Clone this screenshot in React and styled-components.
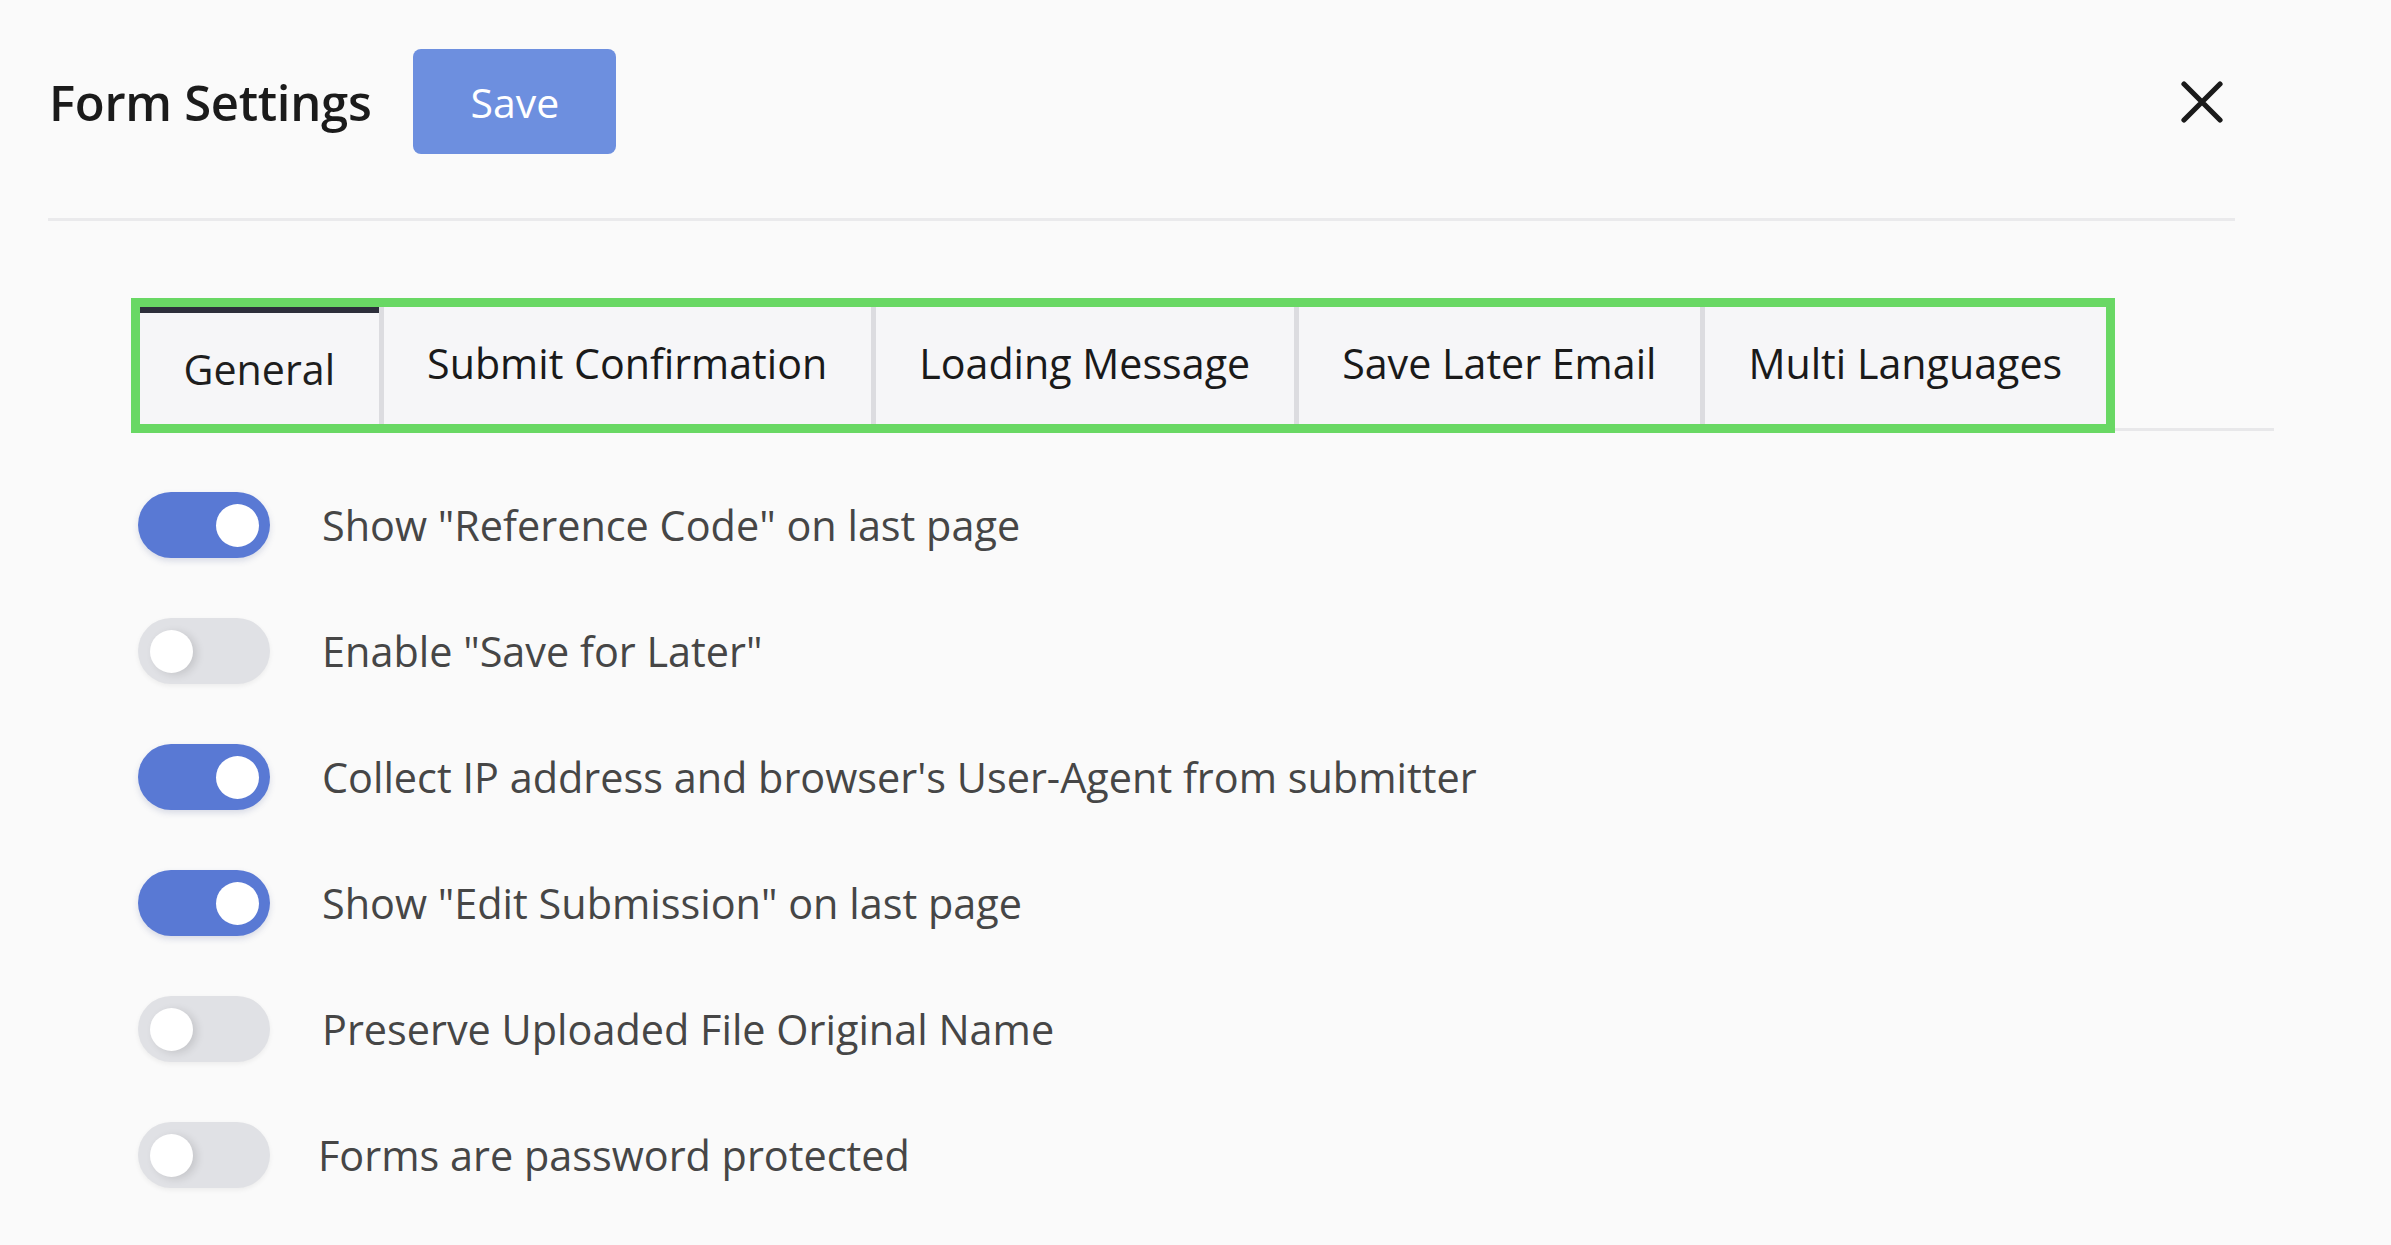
import React, { useState } from 'react'
import styled, { createGlobalStyle } from 'styled-components'

const GlobalStyle = createGlobalStyle`
  html, body {
    margin: 0;
    padding: 0;
    background: #fafafa;
  }
  body {
    font-family: "Open Sans", "Noto Sans", "Liberation Sans", sans-serif;
    color: #222;
  }
`

const Page = styled.div`
  padding: 49px 0 0 48px;
  min-height: 100vh;
  box-sizing: border-box;
`

const Header = styled.header`
  width: 2187px;
  display: flex;
  align-items: center;
  gap: 42px;
  padding-bottom: 64px;
  border-bottom: 3px solid #eaeaec;
`

const Title = styled.h1`
  margin: 0 0 0 1px;
  font-size: 49px;
  font-weight: 600;
  color: #1b1b1b;
  letter-spacing: -0.3px;
`

const SaveButton = styled.button`
  width: 203px;
  height: 105px;
  border: none;
  border-radius: 8px;
  background: #6d8fdf;
  color: #fff;
  font-family: inherit;
  font-size: 41px;
  cursor: pointer;
`

const CloseButton = styled.button`
  margin-left: auto;
  margin-right: 12px;
  width: 42px;
  height: 42px;
  padding: 0;
  border: none;
  background: none;
  display: flex;
  align-items: center;
  justify-content: center;
  cursor: pointer;
`

const TabBar = styled.div`
  margin: 77px 0 0 83px;
  width: 2143px;
  display: flex;
  border-bottom: 3px solid #e8e8ea;
`

const TabList = styled.div`
  display: flex;
  border: 9px solid #69d864;
  margin-bottom: -5px;
  background: #f6f6f8;
`

const Tab = styled.button`
  height: 117px;
  padding: 0 43.5px ${p => (p.$active ? '0' : '6px')};
  border: none;
  border-left: ${p => (p.$first ? 'none' : '5px solid #dcdce0')};
  border-top: ${p => (p.$active ? '6px solid #2d2f3b' : '0')};
  background: #f6f6f8;
  font-family: inherit;
  font-size: 41.2px;
  color: ${p => (p.$active ? '#1e1e1e' : '#1a1a1a')};
  display: flex;
  align-items: center;
  box-sizing: border-box;
  cursor: pointer;
  white-space: nowrap;
`

const Options = styled.div`
  margin: 61px 0 0 90px;
  display: flex;
  flex-direction: column;
  gap: 60px;
`

const Row = styled.label`
  display: flex;
  align-items: center;
  gap: ${p => (p.$tight ? '48px' : '52px')};
  height: 66px;
  cursor: pointer;
`

const Track = styled.span`
  position: relative;
  flex: none;
  width: 132px;
  height: 66px;
  border-radius: 33px;
  background: ${p => (p.$on ? '#5979d4' : '#e0e1e5')};
  box-shadow: ${p => (p.$on ? '0 3px 6px rgba(60, 80, 140, 0.18)' : '0 2px 5px rgba(0, 0, 0, 0.06)')};
`

const Knob = styled.span`
  position: absolute;
  top: 11.5px;
  left: ${p => (p.$on ? '78px' : '12px')};
  width: 43px;
  height: 43px;
  border-radius: 50%;
  background: #fff;
  box-shadow: ${p => (p.$on ? 'none' : '4px 2px 8px rgba(0, 0, 0, 0.12)')};
`

const Label = styled.span`
  font-size: 41.4px;
  color: #464646;
  white-space: nowrap;
`

const tabs = ['General', 'Submit Confirmation', 'Loading Message', 'Save Later Email', 'Multi Languages']

const initialOptions = [
  { label: 'Show "Reference Code" on last page', on: true },
  { label: 'Enable "Save for Later"', on: false },
  { label: "Collect IP address and browser's User-Agent from submitter", on: true },
  { label: 'Show "Edit Submission" on last page', on: true },
  { label: 'Preserve Uploaded File Original Name', on: false },
  { label: 'Forms are password protected', on: false, tight: true },
]

const App = () => {
  const [active, setActive] = useState(0)
  const [options, setOptions] = useState(initialOptions)

  const toggle = (i) => {
    setOptions(options.map((o, j) => (j === i ? { ...o, on: !o.on } : o)))
  }

  return (
    <Page>
      <GlobalStyle />
      <Header>
        <Title>Form Settings</Title>
        <SaveButton>Save</SaveButton>
        <CloseButton aria-label="close">
          <svg width="42" height="42" viewBox="0 0 42 42">
            <path d="M3 3 L39 39 M39 3 L3 39" stroke="#1a1a1a" strokeWidth="5.2" strokeLinecap="round" />
          </svg>
        </CloseButton>
      </Header>

      <TabBar>
        <TabList>
          {tabs.map((t, i) => (
            <Tab key={t} $first={i === 0} $active={i === active} onClick={() => setActive(i)}>
              {t}
            </Tab>
          ))}
        </TabList>
      </TabBar>

      <Options>
        {options.map((o, i) => (
          <Row key={o.label} $tight={o.tight} onClick={() => toggle(i)}>
            <Track $on={o.on}>
              <Knob $on={o.on} />
            </Track>
            <Label>{o.label}</Label>
          </Row>
        ))}
      </Options>
    </Page>
  )
}

export default App
